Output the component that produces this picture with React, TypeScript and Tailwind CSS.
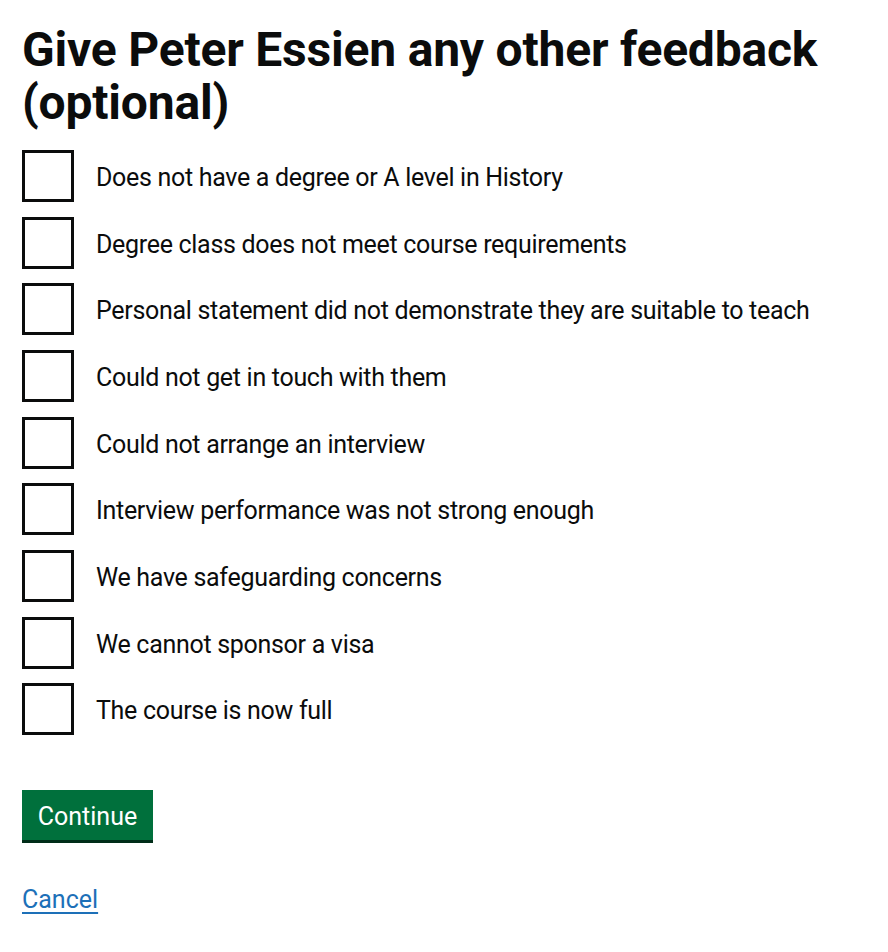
import React from "react";

const items = [
  "Does not have a degree or A level in History",
  "Degree class does not meet course requirements",
  "Personal statement did not demonstrate they are suitable to teach",
  "Could not get in touch with them",
  "Could not arrange an interview",
  "Interview performance was not strong enough",
  "We have safeguarding concerns",
  "We cannot sponsor a visa",
  "The course is now full",
];

export default function App() {
  return (
    <div
      className="min-h-[952px] bg-white px-[22px] pt-[23px] text-[#0b0c0c]"
      style={{ fontFamily: 'Roboto, "Noto Sans", Arial, sans-serif' }}
    >
      <h1 className="text-[48px] leading-[53px] font-bold tracking-[-0.2px]">
        Give Peter Essien any other feedback (optional)
      </h1>
      <div className="mt-[21px] flex flex-col gap-[14.67px]">
        {items.map((t) => (
          <label key={t} className="flex items-center">
            <span className="box-border block h-[52px] w-[52px] shrink-0 border-[3px] border-[#0b0c0c] bg-white" />
            <span className="whitespace-nowrap pl-[22px] pt-[3px] text-[25px] leading-[33px] tracking-[-0.3px]">
              {t}
            </span>
          </label>
        ))}
      </div>
      <button className="mt-[55px] block h-[50px] w-[131px] bg-[#00703c] pt-[2px] text-[25px] leading-[33px] text-white shadow-[0_3px_0_#002d18]">
        Continue
      </button>
      <div className="mt-[43px]">
        <a
          href="#"
          className="text-[25px] leading-[33px] text-[#1d70b8] underline decoration-[2px] underline-offset-[4px]"
        >
          Cancel
        </a>
      </div>
    </div>
  );
}
